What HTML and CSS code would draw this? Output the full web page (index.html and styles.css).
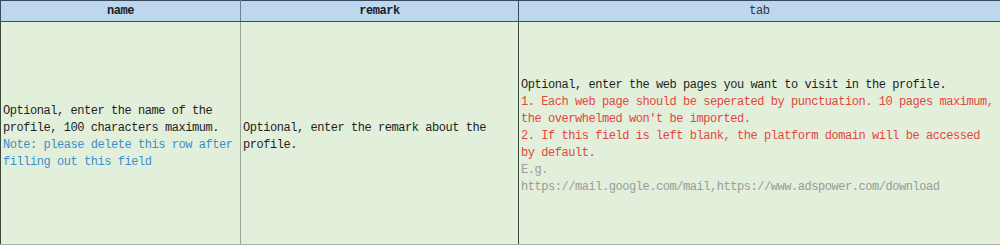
FILE: index.html
```html
<!DOCTYPE html>
<html>
<head>
<meta charset="utf-8">
<link rel="stylesheet" href="styles.css">
</head>
<body>
<table class="sheet">
  <colgroup>
    <col class="c-name">
    <col class="c-remark">
    <col class="c-tab">
  </colgroup>
  <thead>
    <tr class="head">
      <th class="bold">name</th>
      <th class="bold">remark</th>
      <th class="light">tab</th>
    </tr>
  </thead>
  <tbody>
    <tr class="body">
      <td class="cell soft-right">Optional, enter the name of the<br>profile, 100 characters maximum.<br><span class="blue">Note: please delete this row after<br>filling out this field</span></td>
      <td class="cell">Optional, enter the remark about the<br>profile.</td>
      <td class="cell">Optional, enter the web pages you want to visit in the profile.<br><span class="red">1. Each web page should be seperated by punctuation. 10 pages maximum,<br>the overwhelmed won't be imported.<br>2. If this field is left blank, the platform domain will be accessed<br>by default.</span><br><span class="gray">E.g.<br>https://mail.google.com/mail,https://www.adspower.com/download</span></td>
    </tr>
  </tbody>
</table>
</body>
</html>
```

FILE: styles.css
```css
html, body {
  margin: 0;
  padding: 0;
  background: #ffffff;
}

.sheet {
  width: 1000px;
  height: 245px;
  border-collapse: collapse;
  table-layout: fixed;
  font-family: "Liberation Mono", "Noto Sans CJK SC", monospace;
  font-size: 12px;
  letter-spacing: -0.45px;
  color: #1e1e1e;
}

.c-name { width: 240px; }
.c-remark { width: 278px; }
.c-tab { width: 482px; }

.head th {
  height: 20px;
  background: #bdd7ee;
  border-top: 1px solid #3a4a5c;
  border-bottom: 1px solid #3a4a5c;
  border-left: 1px solid #3a4a5c;
  border-right: 1px solid #3a4a5c;
  padding: 0;
  text-align: center;
  vertical-align: middle;
  line-height: 20px;
  color: #202020;
}

.head th.bold { font-weight: bold; }
.head th.light { font-weight: normal; color: #333; }
.head th:first-child { border-right-color: #6f7f8f; }

.body td {
  background: #e2efda;
  border-left: 1px solid #3a4a3a;
  border-right: 1px solid #3a4a3a;
  border-bottom: 1px solid #a8aca6;
  padding: 7px 2px 0 2px;
  vertical-align: middle;
  line-height: 17px;
}

.body td.soft-right { border-right-color: #9aa596; }

.blue { color: #3b8fcb; }
.red { color: #e2463e; }
.gray { color: #9a9a9a; }
```
